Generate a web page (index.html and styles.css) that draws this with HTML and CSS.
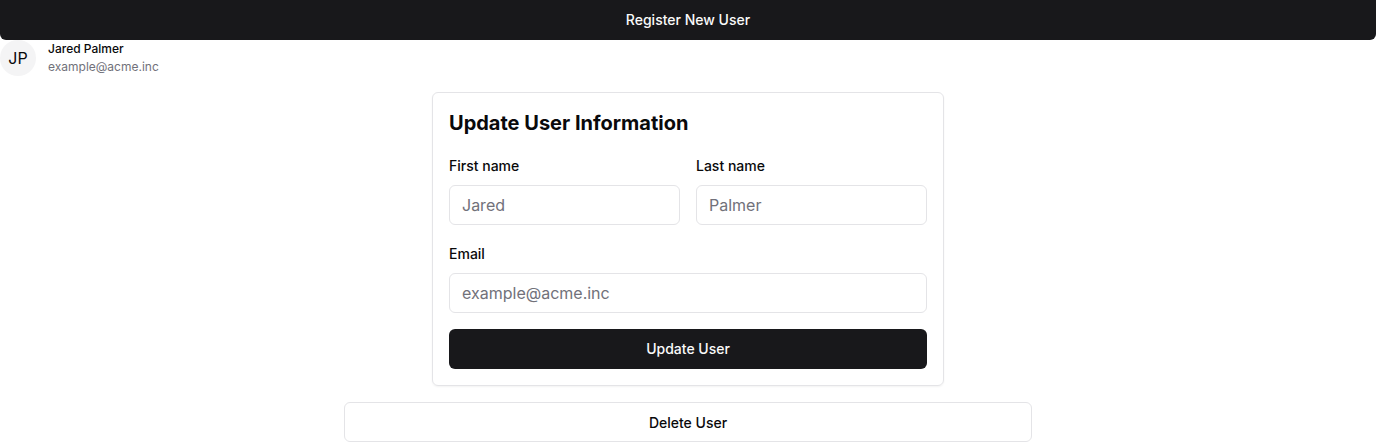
FILE: index.html
```html
<!DOCTYPE html>
<html>
<head>
<meta charset="utf-8">
<link rel="stylesheet" href="styles.css">
</head>
<body>
<div class="page">
  <button class="top-btn">Register New User</button>
  <div class="user-row">
    <div class="avatar">JP</div>
    <div class="user-info">
      <div class="user-name">Jared Palmer</div>
      <div class="user-email">example@acme.inc</div>
    </div>
  </div>
  <form class="card">
    <h2 class="card-title">Update User Information</h2>
    <div class="row">
      <div class="field">
        <label class="label">First name</label>
        <input class="input" placeholder="Jared">
      </div>
      <div class="field">
        <label class="label">Last name</label>
        <input class="input" placeholder="Palmer">
      </div>
    </div>
    <div class="field">
      <label class="label">Email</label>
      <input class="input" placeholder="example@acme.inc">
    </div>
    <button type="button" class="primary-btn">Update User</button>
  </form>
  <div class="delete-wrap">
    <button class="delete-btn">Delete User</button>
  </div>
</div>
</body>
</html>
```

FILE: styles.css
```css
* { box-sizing: border-box; }
html, body { margin: 0; padding: 0; background: #fff; }
body { font-family: Inter, "Noto Sans", sans-serif; color: #09090b; }
.page { display: flex; flex-direction: column; }
.top-btn {
  height: 40px; width: 100%;
  background: #18181b; color: #fafafa;
  border: none; border-radius: 0 0 6px 6px;
  padding: 0 0 2px;
  font-family: inherit; font-size: 14px; font-weight: 500;
}
.user-row { display: flex; align-items: center; gap: 12px; height: 36px; }
.avatar {
  width: 36px; height: 36px; border-radius: 50%;
  background: #f4f4f5; display: flex; align-items: center; justify-content: center;
  font-size: 16px; color: #09090b;
}
.user-info { display: flex; flex-direction: column; gap: 2px; }
.user-name { font-size: 12px; font-weight: 500; line-height: 16px; }
.user-email { font-size: 12px; color: #71717a; line-height: 16px; }
.card {
  width: 512px; margin: 16px auto 0;
  border: 1px solid #e4e4e7; border-radius: 6px;
  padding: 16px; display: flex; flex-direction: column;
  box-shadow: 0 1px 2px rgba(0,0,0,0.05);
}
.card-title { margin: 0 0 20px; font-size: 20px; font-weight: 700; line-height: 28px; }
.row { display: grid; grid-template-columns: 1fr 1fr; gap: 16px; margin-bottom: 20px; }
.field { display: flex; flex-direction: column; gap: 10px; }
.label { font-size: 14px; font-weight: 500; line-height: 18px; }
.input {
  height: 40px; width: 100%;
  border: 1px solid #e4e4e7; border-radius: 6px;
  padding: 0 12px; font-family: inherit; font-size: 16px; color: #09090b; background: #fff;
}
.input::placeholder { color: #71717a; }
.primary-btn {
  margin-top: 16px; height: 40px; width: 100%;
  background: #18181b; color: #fafafa; border: none; border-radius: 6px;
  padding: 0 0 2px;
  font-family: inherit; font-size: 14px; font-weight: 500;
}
.delete-wrap { display: flex; justify-content: center; margin-top: 16px; }
.delete-btn {
  width: 688px; height: 40px; background: #fff;
  border: 1px solid #e4e4e7; border-radius: 6px;
  font-family: inherit; font-size: 14px; font-weight: 500; color: #09090b;
}
```
